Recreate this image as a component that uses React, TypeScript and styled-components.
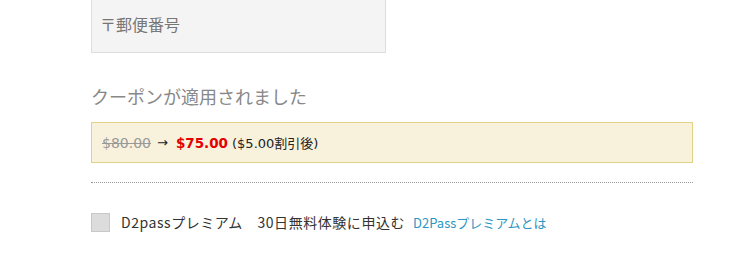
import React from 'react';
import styled, { createGlobalStyle } from 'styled-components';

const GlobalStyle = createGlobalStyle`
  html, body {
    margin: 0;
    padding: 0;
    background: #fff;
  }
  body {
    font-family: 'Noto Sans CJK JP', 'DejaVu Sans', sans-serif;
  }
`;

const SPage = styled.div`
  width: 729px;
  height: 257px;
  overflow: hidden;
  padding-left: 91px;
  box-sizing: border-box;
`;

const SContent = styled.div`
  width: 602px;
  display: flex;
  flex-direction: column;
`;

const SZipInput = styled.div`
  width: 295px;
  height: 54px;
  margin-top: -1px;
  box-sizing: border-box;
  background: #f4f4f4;
  border: 1px solid #dedede;
  display: flex;
  align-items: center;
  padding: 0 0 4px 8px;
  font-size: 16px;
  color: #777;
`;

const SHeading = styled.h3`
  margin: 32px 0 0;
  font-size: 18px;
  font-weight: 400;
  line-height: 22px;
  color: #888;
`;

const SNotice = styled.div`
  margin-top: 15px;
  height: 41px;
  box-sizing: border-box;
  background: #f8f1dc;
  border: 1px solid #e3d283;
  display: flex;
  align-items: center;
  padding-left: 10px;
  font-family: 'DejaVu Sans', 'Noto Sans CJK JP', sans-serif;
  font-size: 13px;
  color: #222;
`;

const SOldPrice = styled.del`
  color: #999;
  font-size: 14px;
`;

const SArrow = styled.span`
  margin: 0 8px 0 6px;
`;

const SNewPrice = styled.strong`
  color: #e30000;
  font-size: 13.5px;
  font-weight: 700;
`;

const SNote = styled.span`
  margin-left: 4px;
  font-size: 13px;
  color: #222;
`;

const SDivider = styled.hr`
  margin: 19px 0 0;
  border: none;
  border-top: 1px dotted #999;
`;

const SOptionRow = styled.label`
  margin-top: 29px;
  display: flex;
  align-items: center;
  font-size: 14px;
  color: #333;
`;

const SCheckbox = styled.span`
  width: 19px;
  height: 19px;
  box-sizing: border-box;
  background: #dcdcdc;
  border: 1px solid #c8c8c8;
  margin-right: 11px;
`;

const SLabel = styled.span`
  letter-spacing: 0.55px;
`;

const SLink = styled.a`
  margin-left: 8px;
  font-size: 13px;
  color: #2a96c4;
  text-decoration: none;
`;

const App = () => {
  return (
    <SPage>
      <GlobalStyle />
      <SContent>
        <SZipInput>〒郵便番号</SZipInput>
        <SHeading>クーポンが適用されました</SHeading>
        <SNotice>
          <SOldPrice>$80.00</SOldPrice>
          <SArrow>→</SArrow>
          <SNewPrice>$75.00</SNewPrice>
          <SNote>($5.00割引後)</SNote>
        </SNotice>
        <SDivider />
        <SOptionRow>
          <SCheckbox />
          <SLabel>D2passプレミアム　30日無料体験に申込む</SLabel>
          <SLink href="#">D2Passプレミアムとは</SLink>
        </SOptionRow>
      </SContent>
    </SPage>
  );
};

export default App;
